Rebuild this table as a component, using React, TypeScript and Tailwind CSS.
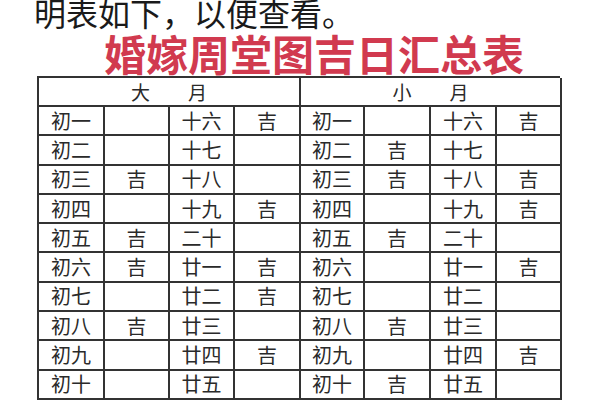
import React from "react";

const big: string[][] = [
  ["初一", "", "十六", "吉"],
  ["初二", "", "十七", ""],
  ["初三", "吉", "十八", ""],
  ["初四", "", "十九", "吉"],
  ["初五", "吉", "二十", ""],
  ["初六", "吉", "廿一", "吉"],
  ["初七", "", "廿二", "吉"],
  ["初八", "吉", "廿三", ""],
  ["初九", "", "廿四", "吉"],
  ["初十", "", "廿五", ""],
];

const small: string[][] = [
  ["初一", "", "十六", "吉"],
  ["初二", "吉", "十七", ""],
  ["初三", "吉", "十八", "吉"],
  ["初四", "", "十九", "吉"],
  ["初五", "吉", "二十", ""],
  ["初六", "", "廿一", "吉"],
  ["初七", "", "廿二", ""],
  ["初八", "吉", "廿三", ""],
  ["初九", "", "廿四", "吉"],
  ["初十", "吉", "廿五", ""],
];

const font = { fontFamily: '"Noto Sans CJK SC", "Noto Sans", sans-serif' };

const Cell = ({ text }: { text: string }) => (
  <div className="flex h-[29.3px] items-center justify-center border-r-2 border-b-2 border-[#333] text-[20px] leading-none text-[#2a2a2a]">
    {text}
  </div>
);

export default function App() {
  return (
    <div className="relative h-[400px] w-[600px] overflow-hidden bg-white" style={font}>
      {/* intro line, cut off at the top */}
      <div className="-mt-[4px] h-[32px] pl-[34px] text-[32px] leading-[32px] text-[#1a1a1a]">
        明表如下，以便查看。
      </div>

      <div className="mt-[4px] h-[42px] pl-[104px] text-[42px] font-bold leading-[42px] text-[#d13a4f]">
        婚嫁周堂图吉日汇总表
      </div>

      <div className="ml-[37px] mt-[2px] grid w-[523px] grid-cols-[66px_65px_65px_66px_64px_66px_66px_65px] border-t-2 border-l-2 border-[#333]">
        <div className="col-span-4 flex h-[29px] items-center justify-center border-r-2 border-b-2 border-[#333] text-[19px] leading-none text-[#2a2a2a]">
          大　　月
        </div>
        <div className="col-span-4 flex h-[29px] items-center justify-center border-r-2 border-b-2 border-[#333] text-[19px] leading-none text-[#2a2a2a]">
          小　　月
        </div>
        {big.map((row, i) => (
          <React.Fragment key={i}>
            {row.map((t, j) => (
              <Cell key={"b" + j} text={t} />
            ))}
            {small[i].map((t, j) => (
              <Cell key={"s" + j} text={t} />
            ))}
          </React.Fragment>
        ))}
      </div>
    </div>
  );
}
